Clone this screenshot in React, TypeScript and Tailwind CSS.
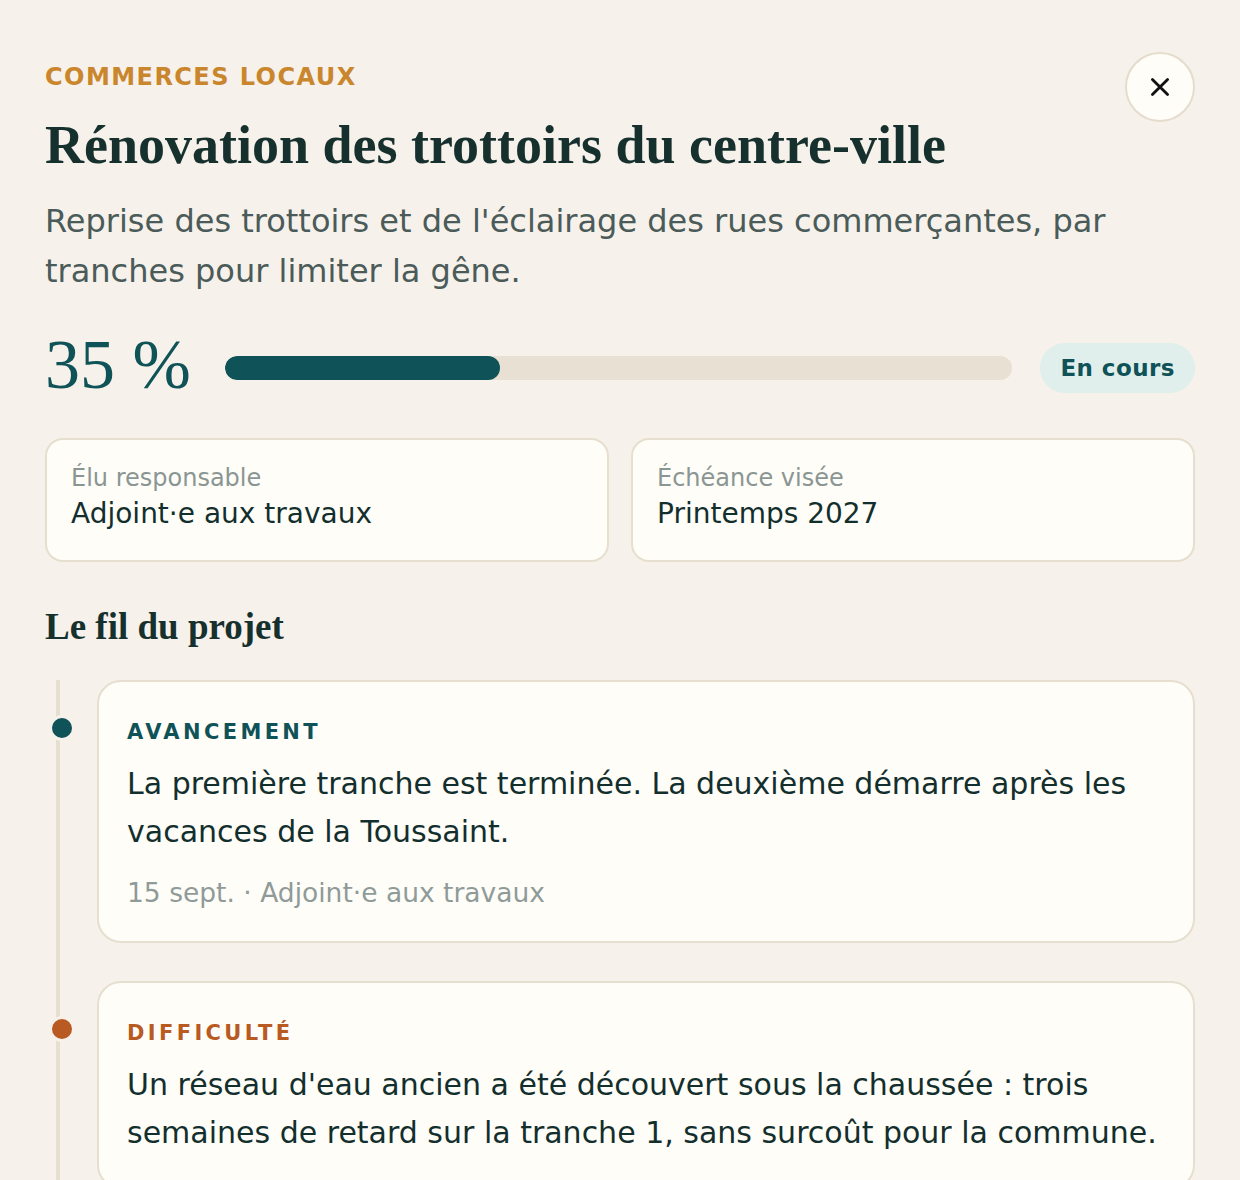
import React from "react";

const sans = "font-['DejaVu_Sans','Liberation_Sans',sans-serif]";
const serif = "font-['Liberation_Serif','DejaVu_Serif',serif]";

function InfoCard({ label, value }: { label: string; value: string }) {
  return (
    <div className="flex-1 rounded-[18px] border-2 border-[#e6dfd0] bg-[#fffdf8] px-[24px] pt-[22px] pb-[28px]">
      <div className="text-[24px] leading-[32px] text-[#8a9693]">{label}</div>
      <div className="mt-[2px] text-[28px] leading-[36px] text-[#132f2d]">{value}</div>
    </div>
  );
}

function Entry({
  kind,
  color,
  text,
  meta,
}: {
  kind: string;
  color: "teal" | "orange";
  text: string;
  meta?: string;
}) {
  const dot = color === "teal" ? "bg-[#0f5257]" : "bg-[#b85a22]";
  const label = color === "teal" ? "text-[#0f5257]" : "text-[#b85a22]";
  return (
    <div className="relative pl-[52px]">
      <span
        className={`absolute left-[4px] top-[35px] h-[26px] w-[26px] rounded-full border-[3px] border-[#f6f1ea] ${dot}`}
      />
      <div className="rounded-[24px] border-2 border-[#e6dfd0] bg-[#fffdf8] px-[28px] pt-[36px] pb-[30px]">
        <div className={`text-[21px] font-bold leading-[28px] tracking-[0.16em] ${label}`}>{kind}</div>
        <p className="mt-[14px] text-[30px] leading-[48px] text-[#132f2d]">{text}</p>
        {meta && <div className="mt-[19px] text-[26.5px] leading-[36px] text-[#8f9b99]">{meta}</div>}
      </div>
    </div>
  );
}

export default function App() {
  return (
    <div className={`h-[1180px] w-full overflow-hidden bg-[#f6f1ea] ${sans}`}>
      <div className="px-[45px] pt-[52px]">
        <div className="flex items-start justify-between">
          <div className="pt-[10px]">
            <div className="text-[24px] font-bold leading-[30px] tracking-[0.06em] text-[#c9862c]">
              COMMERCES LOCAUX
            </div>
          </div>
          <button className="flex h-[70px] w-[70px] items-center justify-center rounded-full border-2 border-[#e4dccd] bg-[#fffdf8]">
            <svg width="26" height="26" viewBox="0 0 24 24" fill="none" stroke="#111" strokeWidth="2.6" strokeLinecap="round">
              <path d="M5 5 L19 19 M19 5 L5 19" />
            </svg>
          </button>
        </div>
        <h1 className={`-mt-[9px] text-[54px] font-bold leading-[64px] text-[#16302e] ${serif}`}>
          Rénovation des trottoirs du centre-ville
        </h1>
        <p className="mt-[19px] text-[32px] leading-[50px] text-[#4b5b59]">
          Reprise des trottoirs et de l'éclairage des rues commerçantes, par tranches pour limiter la gêne.
        </p>

        <div className="mt-[33px] flex items-center gap-[28px]">
          <div className={`pb-[5px] text-[70px] leading-[72px] text-[#0f5257] ${serif}`}>35 %</div>
          <div className="ml-[6px] h-[24px] flex-1 overflow-hidden rounded-full bg-[#e8e0d2]">
            <div className="h-full rounded-full bg-[#0f5257]" style={{ width: "35%" }} />
          </div>
          <span className="rounded-full bg-[#e0efec] px-[20px] py-[9px] text-[23px] font-bold leading-[32px] tracking-[0.02em] text-[#0f5257]">
            En cours
          </span>
        </div>

        <div className="mt-[32px] flex gap-[22px]">
          <InfoCard label="Élu responsable" value="Adjoint·e aux travaux" />
          <InfoCard label="Échéance visée" value="Printemps 2027" />
        </div>

        <h2 className={`mt-[43px] text-[37px] font-bold leading-[44px] text-[#16302e] ${serif}`}>
          Le fil du projet
        </h2>

        <div className="relative mt-[31px] flex flex-col gap-[38px]">
          <div className="absolute left-[11px] top-0 bottom-0 w-[4px] bg-[#e6dfd0]" />
          <Entry
            kind="AVANCEMENT"
            color="teal"
            text="La première tranche est terminée. La deuxième démarre après les vacances de la Toussaint."
            meta="15 sept. · Adjoint·e aux travaux"
          />
          <Entry
            kind="DIFFICULTÉ"
            color="orange"
            text="Un réseau d'eau ancien a été découvert sous la chaussée : trois semaines de retard sur la tranche 1, sans surcoût pour la commune."
          />
        </div>
      </div>
    </div>
  );
}
